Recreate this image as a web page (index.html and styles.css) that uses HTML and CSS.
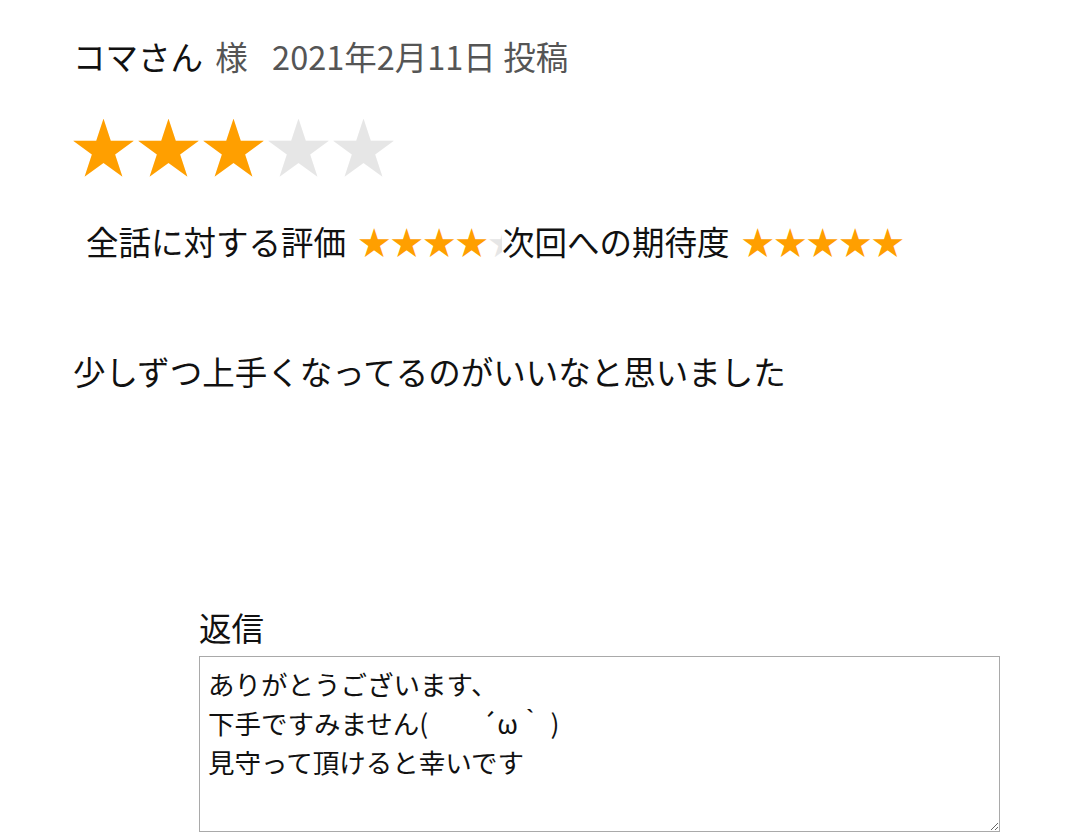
FILE: index.html
```html
<!DOCTYPE html>
<html lang="ja">
<head>
    <meta charset="UTF-8">
    <meta name="viewport" content="width=device-width, initial-scale=1.0">
    <title>レビュー</title>
    <link rel="stylesheet" href="styles.css">
</head>
<body>
    <div class="review">
        <div class="review-head">
            <span class="author">コマさん</span>
            <span class="honor">様</span>
            <span class="posted">2021年2月11日 投稿</span>
        </div>

        <div class="stars big">
            <span class="on">★</span><span class="on">★</span><span class="on">★</span><span class="off">★</span><span class="off">★</span>
        </div>

        <div class="scores">
            <span class="score-label">全話に対する評価</span>
            <span class="stars small clipped">
                <span class="on">★</span><span class="on">★</span><span class="on">★</span><span class="on">★</span><span class="off">★</span>
            </span>
            <span class="score-label next">次回への期待度</span>
            <span class="stars small">
                <span class="on">★</span><span class="on">★</span><span class="on">★</span><span class="on">★</span><span class="on">★</span>
            </span>
        </div>

        <p class="comment">少しずつ上手くなってるのがいいなと思いました</p>

        <div class="reply">
            <div class="reply-title">返信</div>
            <textarea class="reply-body">ありがとうございます、
下手ですみません(　　´ω｀ )
見守って頂けると幸いです</textarea>
        </div>
    </div>
</body>
</html>
```

FILE: styles.css
```css
body {
    margin: 0;
    background: #fff;
    color: #111;
    font-family: "Noto Sans CJK JP", "Noto Sans", sans-serif;
}
.review {
    padding: 32px 73px 0 73px;
}
.review-head {
    font-size: 32.5px;
    line-height: 48px;
    height: 48px;
    white-space: nowrap;
}
.author { color: #111; }
.honor {
    color: #555;
    margin-left: 5px;
}
.posted {
    color: #555;
    margin-left: 17px;
}
.stars {
    display: inline-flex;
    white-space: nowrap;
}
.stars .on { color: #ff9f00; }
.stars .off { color: #e6e6e6; }
.stars.big {
    display: flex;
    font-size: 65px;
    line-height: 65px;
    height: 65px;
    margin-top: 32px;
    margin-left: -2px;
}
.scores {
    display: flex;
    align-items: center;
    margin-top: 40px;
    padding-left: 13px;
    font-size: 32.5px;
    line-height: 48px;
    height: 48px;
    white-space: nowrap;
}
.score-label { margin-right: 12px; }
.stars.small {
    font-size: 32.5px;
    line-height: 48px;
}
.stars.clipped {
    width: 144px;
    overflow: hidden;
}
.comment {
    margin: 82px 0 0 0;
    font-size: 32.5px;
    line-height: 48px;
}
.reply {
    margin-top: 208px;
    margin-left: 126px;
}
.reply-title {
    font-size: 32.5px;
    line-height: 48px;
}
.reply-body {
    display: block;
    box-sizing: border-box;
    width: 801px;
    height: 176px;
    margin-top: 5px;
    padding: 7px 8px;
    border: 1px solid #a9a9a9;
    border-radius: 0;
    font-family: "Noto Sans CJK JP", sans-serif;
    font-size: 26.5px;
    line-height: 39px;
    color: #111;
}
```
